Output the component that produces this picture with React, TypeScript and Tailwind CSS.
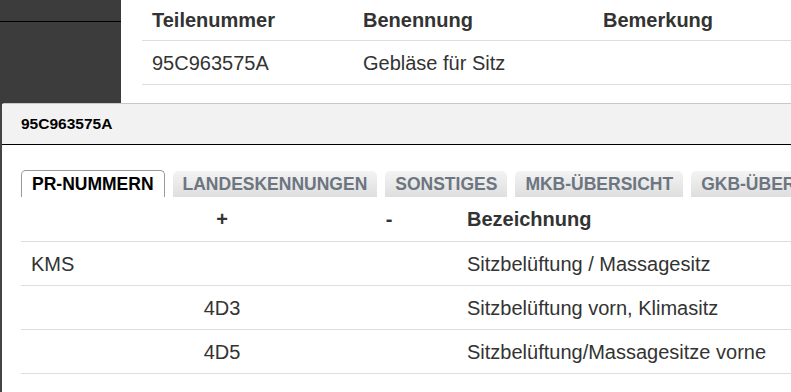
import React from "react";

const tabs = ["PR-NUMMERN", "LANDESKENNUNGEN", "SONSTIGES", "MKB-ÜBERSICHT", "GKB-ÜBERSICHT"];

const rows = [
  { a: "KMS", plus: "", minus: "", text: "Sitzbelüftung / Massagesitz" },
  { a: "", plus: "4D3", minus: "", text: "Sitzbelüftung vorn, Klimasitz" },
  { a: "", plus: "4D5", minus: "", text: "Sitzbelüftung/Massagesitze vorne" },
];

const App = () => {
  return (
    <div
      className="relative w-[791px] h-[392px] overflow-hidden bg-white text-[#333]"
      style={{ fontFamily: '"Liberation Sans", Arial, sans-serif' }}
    >
      <div className="flex h-full">
        {/* sidebar */}
        <div className="w-[121px] shrink-0 bg-[#3c3c3c]">
          <div className="h-[22px] border-b border-black" />
        </div>

        {/* parts table */}
        <div className="flex-1 pl-[21px] text-[20px]">
          <div className="grid grid-cols-[211px_240px_1fr] h-[41px] items-center border-b border-[#ddd] font-bold">
            <div className="pl-[10px]">Teilenummer</div>
            <div className="pl-[10px]">Benennung</div>
            <div className="pl-[10px]">Bemerkung</div>
          </div>
          <div className="grid grid-cols-[211px_240px_1fr] h-[44px] items-center border-b border-[#ddd]">
            <div className="pl-[10px]">95C963575A</div>
            <div className="pl-[10px]">Gebläse für Sitz</div>
            <div className="pl-[10px]" />
          </div>
        </div>
      </div>

      {/* dialog */}
      <div className="absolute left-0 top-[103px] w-[840px] h-[320px] bg-white border-t border-[#c8c8c8] border-l-2 border-l-[#444] rounded-tl-[5px]">
        <div className="h-[41px] bg-[#f2f2f2] border-b border-black flex items-center pl-[19px] text-[15.5px] font-bold text-black">
          95C963575A
        </div>

        <div className="pl-[19px] pt-[25px]">
          <div className="flex gap-[8px] h-[27px] items-end">
            {tabs.map((t, i) =>
              i === 0 ? (
                <div
                  key={t}
                  className="shrink-0 whitespace-nowrap h-[27px] px-[10px] flex items-center border border-b-0 border-[#999] rounded-t-[5px] bg-white text-[17.5px] font-bold text-black"
                >
                  {t}
                </div>
              ) : (
                <div
                  key={t}
                  className="shrink-0 whitespace-nowrap h-[26px] px-[10px] flex items-center rounded-t-[5px] bg-gradient-to-b from-[#f4f4f4] to-[#dedede] text-[17.5px] font-bold text-[#6c7580]"
                >
                  {t}
                </div>
              )
            )}
          </div>

          <div className="text-[20px] text-[#333]">
            <div className="grid grid-cols-[102px_198px_136px_1fr] h-[45px] items-center border-b border-[#ddd] font-bold">
              <div className="pl-[10px]" />
              <div className="text-center">+</div>
              <div className="text-center">-</div>
              <div className="pl-[10px]">Bezeichnung</div>
            </div>
            {rows.map((r, i) => (
              <div
                key={i}
                className="grid grid-cols-[102px_198px_136px_1fr] h-[44px] items-center border-b border-[#ddd]"
              >
                <div className="pl-[10px]">{r.a}</div>
                <div className="text-center">{r.plus}</div>
                <div className="text-center">{r.minus}</div>
                <div className="pl-[10px] whitespace-nowrap">{r.text}</div>
              </div>
            ))}
          </div>
        </div>
      </div>
    </div>
  );
};

export default App;
